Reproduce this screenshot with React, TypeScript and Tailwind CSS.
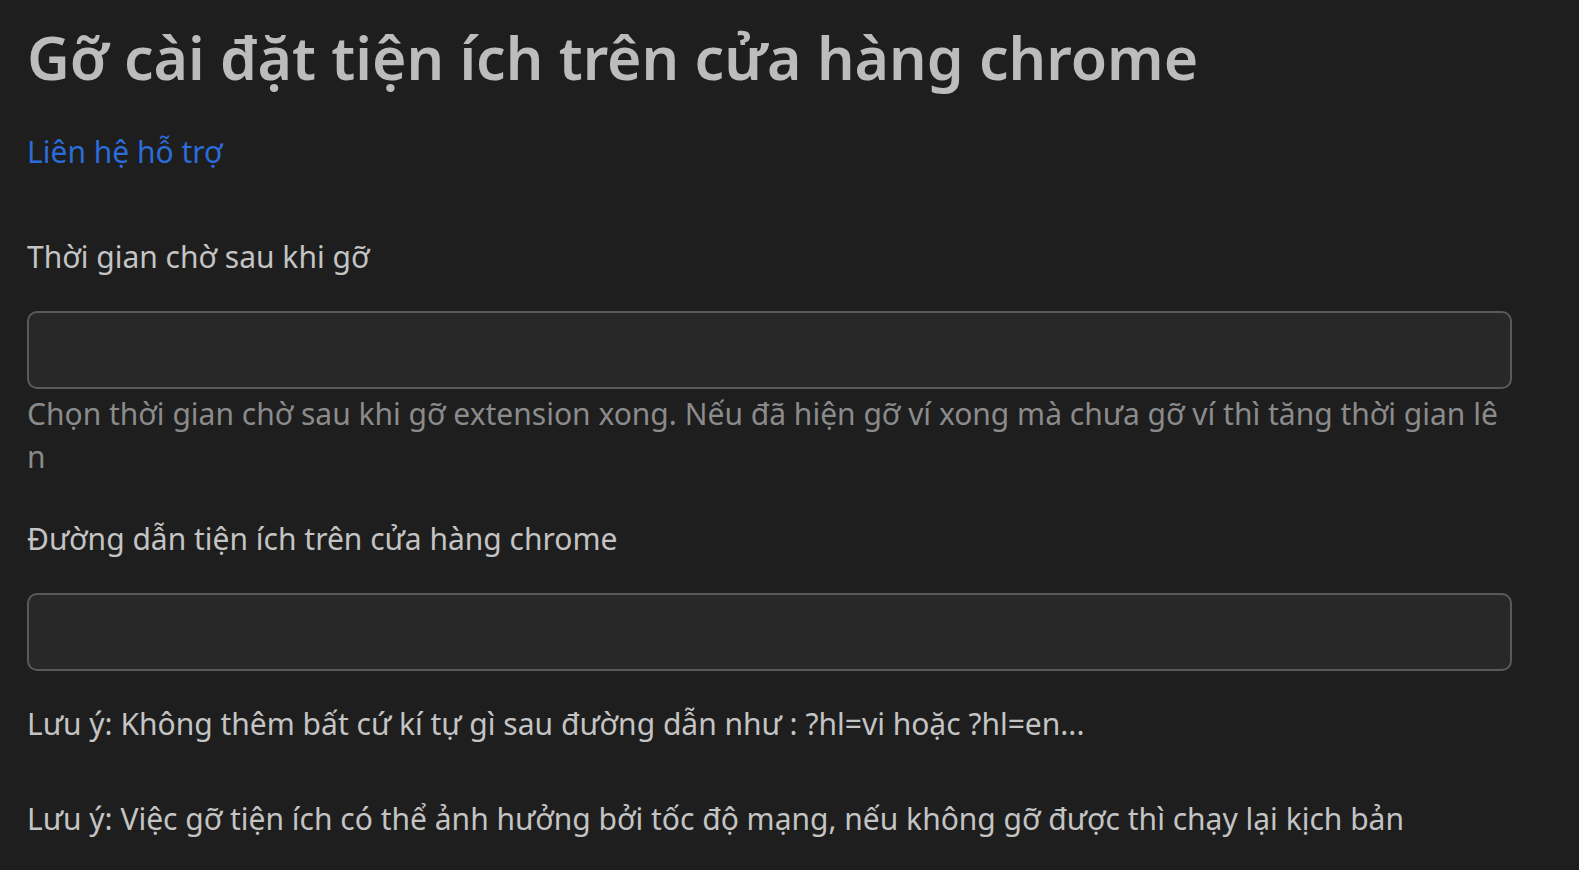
export default function App() {
  return (
    <div className="min-h-[870px] bg-[#1e1e1e] pl-[27px] pr-[67px] pt-[18px] font-['Noto_Sans',sans-serif]">
      <h1 className="text-[59px] leading-[78px] font-semibold text-[#bcbcbc] whitespace-nowrap">
        Gỡ cài đặt tiện ích trên cửa hàng chrome
      </h1>
      <a href="#" className="mt-[34px] block w-fit text-[30px] leading-[43px] text-[#2b6cd8]">
        Liên hệ hỗ trợ
      </a>

      <label className="mt-[62px] block text-[30px] leading-[43px] text-[#c4c4c4]">
        Thời gian chờ sau khi gỡ
      </label>
      <input
        type="text"
        className="mt-[33px] block h-[78px] w-[1485px] rounded-[10px] border-2 border-[#595959] bg-[#282828] px-4 text-[30px] text-[#c4c4c4] outline-none"
      />
      <p className="mt-[3px] w-[1485px] break-all text-[30px] leading-[43px] text-[#8b8b8b]">
        Chọn thời gian chờ sau khi gỡ extension xong. Nếu đã hiện gỡ ví xong mà chưa gỡ ví thì tăng thời gian lên
      </p>

      <label className="mt-[39px] block text-[30px] leading-[43px] text-[#c4c4c4]">
        Đường dẫn tiện ích trên cửa hàng chrome
      </label>
      <input
        type="text"
        className="mt-[33px] block h-[78px] w-[1485px] rounded-[10px] border-2 border-[#595959] bg-[#282828] px-4 text-[30px] text-[#c4c4c4] outline-none"
      />
      <p className="mt-[31px] text-[30px] leading-[43px] text-[#c4c4c4]">
        Lưu ý: Không thêm bất cứ kí tự gì sau đường dẫn như : ?hl=vi hoặc ?hl=en...
      </p>
      <p className="mt-[52px] text-[30px] leading-[43px] text-[#c4c4c4]">
        Lưu ý: Việc gỡ tiện ích có thể ảnh hưởng bởi tốc độ mạng, nếu không gỡ được thì chạy lại kịch bản
      </p>
    </div>
  );
}
